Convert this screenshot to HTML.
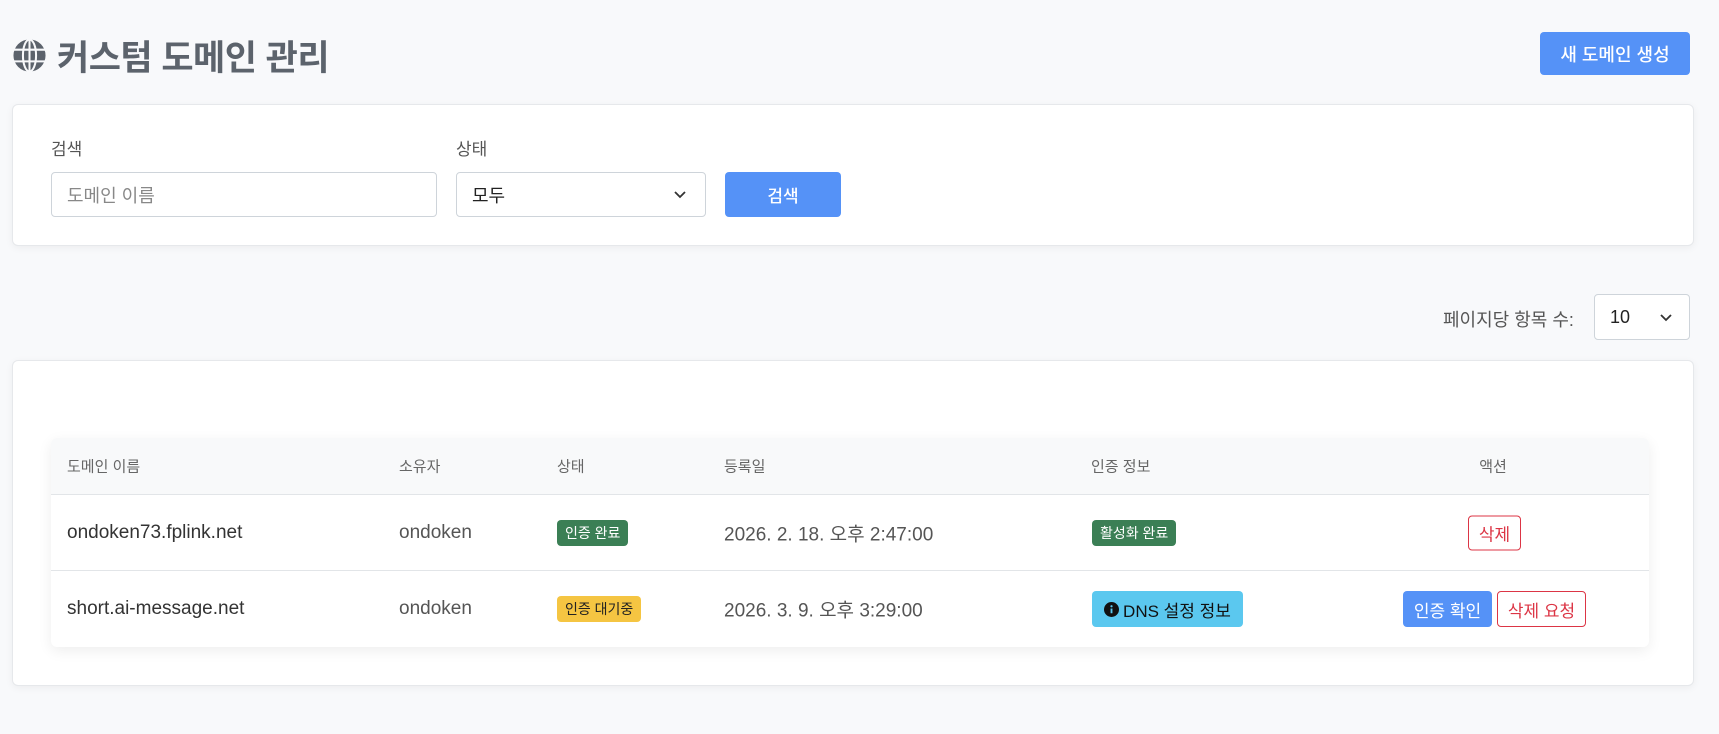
<!DOCTYPE html>
<html><head><meta charset="utf-8"><style>
*{box-sizing:border-box;margin:0;padding:0}
body{width:1719px;height:734px;background:#f8f9fb;font-family:"Liberation Sans","Noto Sans CJK KR",sans-serif;color:#333;position:relative;overflow:hidden}
.abs{position:absolute}
h1{position:absolute;left:12px;top:30px;font-size:35px;font-weight:bold;color:#5c636c;display:flex;align-items:center;gap:10px;letter-spacing:-0.5px}
.btn{position:absolute;display:flex;align-items:center;justify-content:center;border-radius:4px;font-size:17px}
.card{position:absolute;background:#fff;border:1px solid #e6e8eb;border-radius:6px;box-shadow:0 2px 8px rgba(0,0,0,.05)}
.lbl{position:absolute;font-size:17px;color:#555}
.inp{position:absolute;border:1px solid #ced4da;border-radius:4px;background:#fff;font-size:18px;display:flex;align-items:center;padding-left:15px}
.tbl{position:absolute;left:51px;top:438px;width:1598px;height:209px;background:#fff;border-radius:6px;box-shadow:0 4px 14px rgba(0,0,0,.07);overflow:hidden}
.hd{position:absolute;left:0;top:0;width:100%;height:57px;background:#f8f9fa;border-bottom:1px solid #e2e5e8}
.row{position:absolute;left:0;width:100%;border-bottom:1px solid #e2e5e8}
.c{position:absolute;top:50%;transform:translateY(-50%);white-space:nowrap}
.th{font-size:15px;color:#666}
.td{font-size:19px;color:#333}
.bd{font-size:14px;color:#fff;padding:3px 8px;border-radius:4px}
</style></head><body>
<h1><svg width="35" height="35" viewBox="0 0 24 24"><circle cx="12" cy="12" r="11" fill="#5c636c"/><g stroke="#f8f9fb" stroke-width="1.4" fill="none"><ellipse cx="12" cy="12" rx="4.5" ry="11"/><line x1="12" y1="1" x2="12" y2="23"/><line x1="1" y1="8" x2="23" y2="8"/><line x1="1" y1="16" x2="23" y2="16"/></g></svg>커스텀 도메인 관리</h1>
<div class="btn" style="left:1540px;top:32px;width:150px;height:43px;background:#5592f7;color:#fff;font-size:18px;font-weight:500">새 도메인 생성</div>
<div class="card" style="left:12px;top:104px;width:1682px;height:142px"></div>
<div class="lbl" style="left:51px;top:135px">검색</div>
<div class="lbl" style="left:456px;top:135px">상태</div>
<div class="inp" style="left:51px;top:172px;width:386px;height:45px;color:#888">도메인 이름</div>
<div class="inp" style="left:456px;top:172px;width:250px;height:45px;color:#222">모두<svg class="abs" style="right:18px;top:17px" width="14" height="10" viewBox="0 0 14 10"><path d="M2 2l5 5 5-5" stroke="#333" stroke-width="1.8" fill="none"/></svg></div>
<div class="btn" style="left:725px;top:172px;width:116px;height:45px;background:#5592f7;color:#fff;font-weight:500">검색</div>
<div class="lbl" style="left:1443px;top:306px;font-size:18px">페이지당 항목 수:</div>
<div class="inp" style="left:1594px;top:294px;width:96px;height:46px;color:#222">10<svg class="abs" style="right:16px;top:18px" width="14" height="10" viewBox="0 0 14 10"><path d="M2 2l5 5 5-5" stroke="#333" stroke-width="1.8" fill="none"/></svg></div>
<div class="card" style="left:12px;top:360px;width:1682px;height:326px"></div>
<div class="tbl">
 <div class="hd">
  <span class="c th" style="left:16px">도메인 이름</span>
  <span class="c th" style="left:348px">소유자</span>
  <span class="c th" style="left:506px">상태</span>
  <span class="c th" style="left:673px">등록일</span>
  <span class="c th" style="left:1040px">인증 정보</span>
  <span class="c th" style="left:1442px;transform:translate(-50%,-50%)">액션</span>
 </div>
 <div class="row" style="top:57px;height:76px">
  <span class="c td" style="left:16px">ondoken73.fplink.net</span>
  <span class="c td" style="left:348px;color:#555">ondoken</span>
  <span class="c bd" style="left:506px;background:#3b7f55">인증 완료</span>
  <span class="c td" style="left:673px;color:#555">2026. 2. 18. 오후 2:47:00</span>
  <span class="c bd" style="left:1041px;background:#3b7f55">활성화 완료</span>
  <span class="c" style="left:1417px;width:53px;height:35px;border:1px solid #dc3545;color:#dc3545;border-radius:4px;font-size:17px;display:flex;align-items:center;justify-content:center">삭제</span>
 </div>
 <div class="row" style="top:133px;height:76px;border:none">
  <span class="c td" style="left:16px">short.ai-message.net</span>
  <span class="c td" style="left:348px;color:#555">ondoken</span>
  <span class="c bd" style="left:506px;background:#f5c542;color:#222">인증 대기중</span>
  <span class="c td" style="left:673px;color:#555">2026. 3. 9. 오후 3:29:00</span>
  <span class="c" style="left:1041px;width:151px;height:36px;background:#5bc8ef;color:#111;border-radius:4px;font-size:17px;display:flex;align-items:center;justify-content:center;gap:4px"><svg width="15" height="15" viewBox="0 0 16 16"><circle cx="8" cy="8" r="8" fill="#111"/><rect x="7" y="7" width="2" height="5" fill="#5bc8ef"/><circle cx="8" cy="4.5" r="1.2" fill="#5bc8ef"/></svg>DNS 설정 정보</span>
  <span class="c" style="left:1352px;width:89px;height:36px;background:#5592f7;color:#fff;border-radius:4px;font-size:17px;display:flex;align-items:center;justify-content:center">인증 확인</span>
  <span class="c" style="left:1446px;width:89px;height:36px;border:1px solid #dc3545;color:#dc3545;border-radius:4px;font-size:17px;display:flex;align-items:center;justify-content:center">삭제 요청</span>
 </div>
</div>
</body></html>
